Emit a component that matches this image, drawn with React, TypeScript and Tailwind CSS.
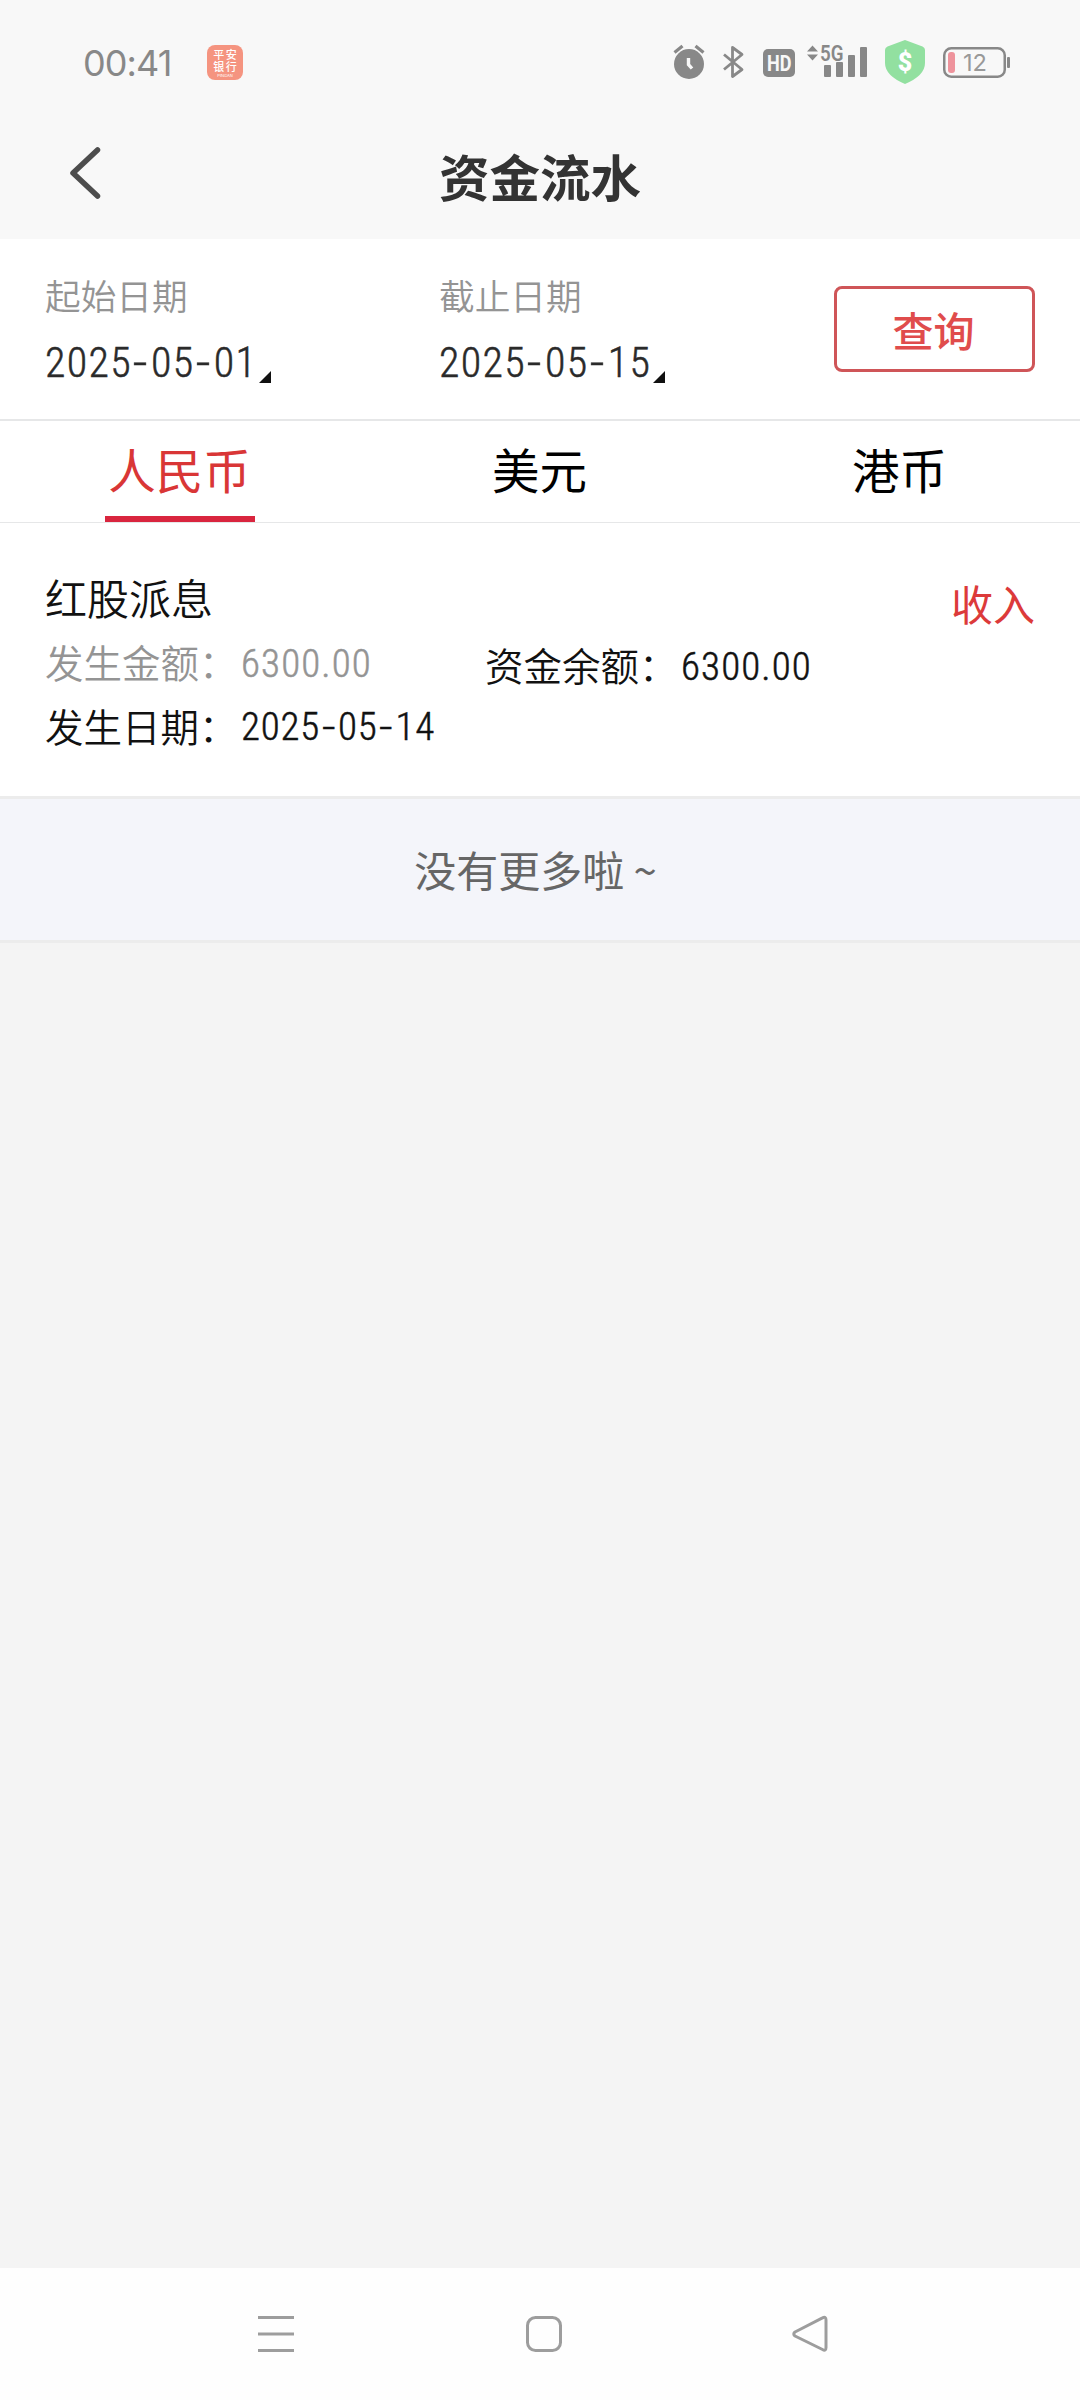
import { useState } from "react"

type FundRecord = {
  id: string
  title: string
  amount: string
  balance: string
  date: string
  direction: string
}

const currencies = [
  { key: "cny", label: "人民币" },
  { key: "usd", label: "美元" },
  { key: "hkd", label: "港币" },
]

const records: FundRecord[] = [
  {
    id: "1",
    title: "红股派息",
    amount: "6300.00",
    balance: "6300.00",
    date: "2025-05-14",
    direction: "收入",
  },
]

function StatusBar() {
  return (
    <div className="flex h-[84px] items-start pl-[83px] font-[Inter,sans-serif] text-[#888888]">
      <span className="mt-[41px] w-[124px] text-[36px] leading-[44px] tracking-[-0.9px]">00:41</span>
      <div className="mt-[45px] flex h-[35px] w-9 flex-col items-center rounded-[8px] bg-[#f59480] pt-[3px] font-['Noto_Sans_CJK_SC',sans-serif] text-[11px] font-medium text-white">
        <span className="h-[12px] pl-[1.5px] leading-[12px] tracking-[1.5px]">平安</span>
        <span className="h-[12px] pl-[1.5px] leading-[12px] tracking-[1.5px]">银行</span>
        <span className="mt-px h-[5px] font-[Inter,sans-serif] text-[4px] font-normal leading-[5px]">PINGAN</span>
      </div>

      <svg className="ml-[427px] mt-10 h-11 w-[340px]" viewBox="670 40 340 44" fill="none">
        {/* alarm */}
        <circle cx="689" cy="64" r="15" fill="#888" />
        <path d="M674.5 52.5l8-6.5M703.5 52.5l-8-6.5" stroke="#888" strokeWidth="3.2" />
        <path d="M688.5 58v6.5l3.5 4" stroke="#f8f8f8" strokeWidth="3.4" />
        {/* bluetooth */}
        <path
          d="M724 54.5L742 69.5L732.5 76.5V47.5L742 54.5L724 69.5"
          stroke="#888"
          strokeWidth="2.8"
          strokeLinejoin="round"
        />
        {/* HD */}
        <rect x="763" y="49" width="32" height="28" rx="5" fill="#888" />
        <text x="767" y="71" fontSize="22.5" fontWeight="700" fill="#f8f8f8" fontFamily="Roboto, sans-serif" textLength="24.5" lengthAdjust="spacingAndGlyphs">
          HD
        </text>
        {/* signal */}
        <path d="M807 51.5l5.5-6 5.5 6zM807 54.5h11l-5.5 6z" fill="#888" />
        <text x="820" y="60.5" fontSize="21.5" fontWeight="600" fill="#888" fontFamily="Roboto, sans-serif" textLength="23.5" lengthAdjust="spacingAndGlyphs">
          5G
        </text>
        <rect x="824" y="65" width="7" height="12" rx="1" fill="#888" />
        <rect x="836" y="62" width="7" height="15" rx="1" fill="#888" />
        <rect x="848" y="55" width="7" height="22" rx="1" fill="#888" />
        <rect x="860" y="47" width="7" height="30" rx="1" fill="#888" />
        {/* shield */}
        <path
          d="M905 40L922.5 46.5Q925 47.5 925 50V63Q925 75.5 905 84Q885 75.5 885 63V50Q885 47.5 887.5 46.5Z"
          fill="#92e0a0"
        />
        <text x="905" y="70.5" textAnchor="middle" fontSize="25" fontWeight="900" fill="#fff" fontFamily="Roboto, sans-serif">
          $
        </text>
        {/* battery */}
        <rect x="944.25" y="48.25" width="60.5" height="28.5" rx="7" stroke="#888" strokeWidth="2.5" />
        <rect x="1007" y="57" width="3" height="11" rx="1" fill="#888" />
        <rect x="948" y="52" width="7" height="21" rx="3" fill="#ee939c" />
        <text x="975" y="71.3" textAnchor="middle" fontSize="23.5" fill="#999" fontFamily="Inter, sans-serif" textLength="24" lengthAdjust="spacingAndGlyphs">
          12
        </text>
      </svg>
    </div>
  )
}

function Header() {
  return (
    <div className="grid h-[155px] grid-cols-[1fr_auto_1fr] items-start">
      <svg className="ml-[68px] mt-[61px] h-[56px] w-[34px]" viewBox="0 0 34 56" fill="none">
        <path d="M29.5 5L5 28L29.5 51" stroke="#4d4d4d" strokeWidth="5.5" strokeLinecap="round" strokeLinejoin="round" />
      </svg>
      <h1 className="mt-[55px] text-[50.5px] font-bold leading-[72px] text-[#333333]">资金流水</h1>
    </div>
  )
}

// Condensed digits with wide dashes
function Digits({ value, className = "" }: { value: string; className?: string }) {
  return (
    <span
      className={`whitespace-nowrap font-[Roboto,sans-serif] font-light font-stretch-[85%] [-webkit-text-stroke:0.5px_currentColor] ${className}`}
    >
      {value.split("-").map((part, i) => (
        <span key={i}>
          {i > 0 && <span className="mx-[3.5px] inline-block scale-x-140">-</span>}
          {part}
        </span>
      ))}
    </span>
  )
}

function DateField({ label, value }: { label: string; value: string }) {
  return (
    <div className="w-[394px]">
      <div className="h-[52px] text-[35.7px] font-[350] leading-[52px] text-[#949494]">{label}</div>
      <div className="mt-[12px] flex h-[60px] items-end">
        <Digits value={value} className="w-[207px] text-[42px] leading-[60px] tracking-[1.3px] text-[#2a2a2a]" />
        <svg className="mb-[10px] ml-[7px] h-3 w-3" viewBox="0 0 12 12">
          <path d="M12 0V12H0Z" fill="#111" />
        </svg>
      </div>
    </div>
  )
}

function FilterBar() {
  return (
    <div className="flex h-[182px] border-b-2 border-[#e6e7e8] bg-white pl-[45px] pt-[30px]">
      <DateField label="起始日期" value="2025-05-01" />
      <DateField label="截止日期" value="2025-05-15" />
      <button className="ml-px mt-[17px] h-[86px] w-[201px] rounded-[8px] border-[3px] border-[#cf5558] pr-[2px] text-[41px] font-medium leading-[78px] text-[#e04c4c]">
        查询
      </button>
    </div>
  )
}

function Tabs() {
  const [active, setActive] = useState("cny")
  return (
    <div className="grid h-[102px] grid-cols-3 border-b border-[#e6e7e8] bg-white">
      {currencies.map((c) => (
        <button
          key={c.key}
          onClick={() => setActive(c.key)}
          className={`mx-auto flex h-[101px] w-[150px] justify-center whitespace-nowrap pr-px text-[47.5px] leading-[96px] ${
            active === c.key ? "border-b-6 border-[#d9253e] text-[#d93636]" : "text-black"
          }`}
        >
          {c.label}
        </button>
      ))}
    </div>
  )
}

function RecordItem({ record }: { record: FundRecord }) {
  return (
    <div className="flex h-[276px] justify-between border-b-3 border-[#ececec] bg-white px-[45px] pt-[42px] font-[350] text-[#111111]">
      <div className="flex flex-col">
        <div className="h-[64px] text-[42px] leading-[63px]">{record.title}</div>
        <div className="flex h-[64px] text-[38.5px] leading-[64px]">
          <div className="flex w-[440px] text-[#949494]">
            <span className="w-[196px]">发生金额：</span>
            <Digits value={record.amount} className="mt-[3px] text-[39px] tracking-[1.1px]" />
          </div>
          <div className="mt-[3px] flex">
            <span className="w-[196px]">资金余额：</span>
            <Digits value={record.balance} className="mt-[3px] text-[39px] tracking-[1.1px]" />
          </div>
        </div>
        <div className="flex h-[64px] text-[38.5px] leading-[64px]">
          <span className="w-[196px]">发生日期：</span>
          <Digits value={record.date} className="mt-[2px] text-[39px] tracking-[0.8px]" />
        </div>
      </div>
      <span className="mt-[6px] text-[42px] font-normal leading-[64px] text-[#dc3a3a]">{record.direction}</span>
    </div>
  )
}

function NavBar() {
  return (
    <div className="flex h-[132px] items-start bg-[#fefefe] pl-[257px] pt-[47px]">
      <svg className="h-[38px] w-[38px]" viewBox="0 0 38 38" fill="none" stroke="#9d9d9d" strokeWidth="3">
        <path d="M1 2.5H37M1 19H37M1 35.5H37" />
      </svg>
      <svg className="ml-[230px] h-[38px] w-[38px]" viewBox="0 0 38 38" fill="none" stroke="#9d9d9d" strokeWidth="3">
        <rect x="2.5" y="2.5" width="33" height="33" rx="8" />
      </svg>
      <svg className="ml-[228px] h-[38px] w-[38px]" viewBox="0 0 38 38" fill="none" stroke="#9d9d9d" strokeWidth="3">
        <path d="M31.5 2.9Q35 1 35 5V32.5Q35 36.5 31.5 34.5L4 21Q1.5 19 4 17Z" strokeLinejoin="round" />
      </svg>
    </div>
  )
}

export default function App() {
  return (
    <div className="flex h-[2400px] w-[1080px] flex-col bg-[#f4f4f4] font-['Noto_Sans_CJK_SC',sans-serif]">
      <div className="h-[239px] bg-[#f8f8f8]">
        <StatusBar />
        <Header />
      </div>
      <FilterBar />
      <Tabs />
      <div className="flex-1">
        {records.map((r) => (
          <RecordItem key={r.id} record={r} />
        ))}
        <div className="h-[144px] border-b-3 border-[#ececec] bg-[#f4f5fa] pr-[9px] pt-[38px] text-center text-[42px] leading-[64px] text-[#666666]">
          没有更多啦 ~
        </div>
      </div>
      <NavBar />
    </div>
  )
}
